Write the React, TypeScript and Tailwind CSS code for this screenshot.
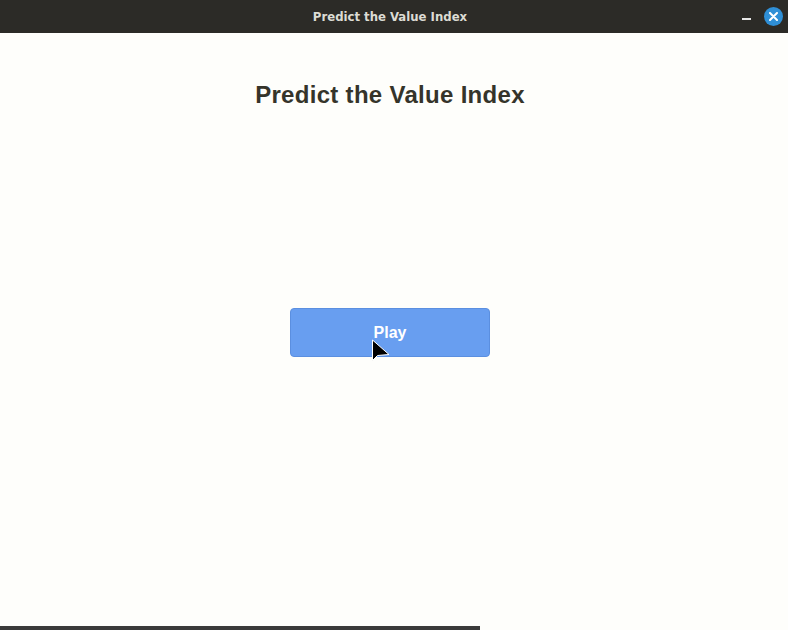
import React from "react";

const TitleBar = (): JSX.Element => (
  <header className="h-[33px] bg-[#2c2b27] flex items-center justify-center relative pr-[8px]">
    <span
      className="text-[13px] font-bold text-[#dcdcd4]"
      style={{ fontFamily: "'DejaVu Sans Condensed', 'DejaVu Sans', sans-serif" }}
    >
      Predict the Value Index
    </span>
    <div className="absolute right-[5px] top-[7px] flex items-center gap-[13px]">
      <span className="block w-[9px] h-[2px] bg-[#e6e6e6] mt-[4px]" />
      <span className="w-[19px] h-[19px] rounded-full bg-[#2f8fd6] flex items-center justify-center">
        <svg width="9" height="9" viewBox="0 0 9 9">
          <path d="M1 1 L8 8 M8 1 L1 8" stroke="#fff" strokeWidth="2" strokeLinecap="round" />
        </svg>
      </span>
    </div>
  </header>
);

const App = (): JSX.Element => {
  return (
    <div
      className="w-[788px] h-[630px] bg-[#fefefb] flex flex-col overflow-hidden relative"
      style={{ fontFamily: "'Liberation Sans', Arial, sans-serif" }}
    >
      <TitleBar />
      <main className="flex-1 flex flex-col items-center pr-[8px]">
        <h1 className="mt-[48px] text-[24px] font-bold tracking-[0.3px] text-[#35342a] leading-[28px]">
          Predict the Value Index
        </h1>
        <button className="mt-[199px] w-[200px] h-[49px] rounded-[4px] bg-[#689ef0] border border-[#5b8fe0] text-white text-[16px] font-bold">
          Play
        </button>
      </main>
      <div className="h-[4px] w-[480px] bg-[#3a3a3a]" />
      <svg
        className="absolute left-[371px] top-[339px]"
        width="20"
        height="24"
        viewBox="0 0 20 24"
      >
        <path d="M1.5 1 L1.5 21.5 L6.5 16.5 L18 15.5 Z" fill="#000" stroke="#fff" strokeWidth="1" strokeLinejoin="round" />
      </svg>
    </div>
  );
};

export default App;
